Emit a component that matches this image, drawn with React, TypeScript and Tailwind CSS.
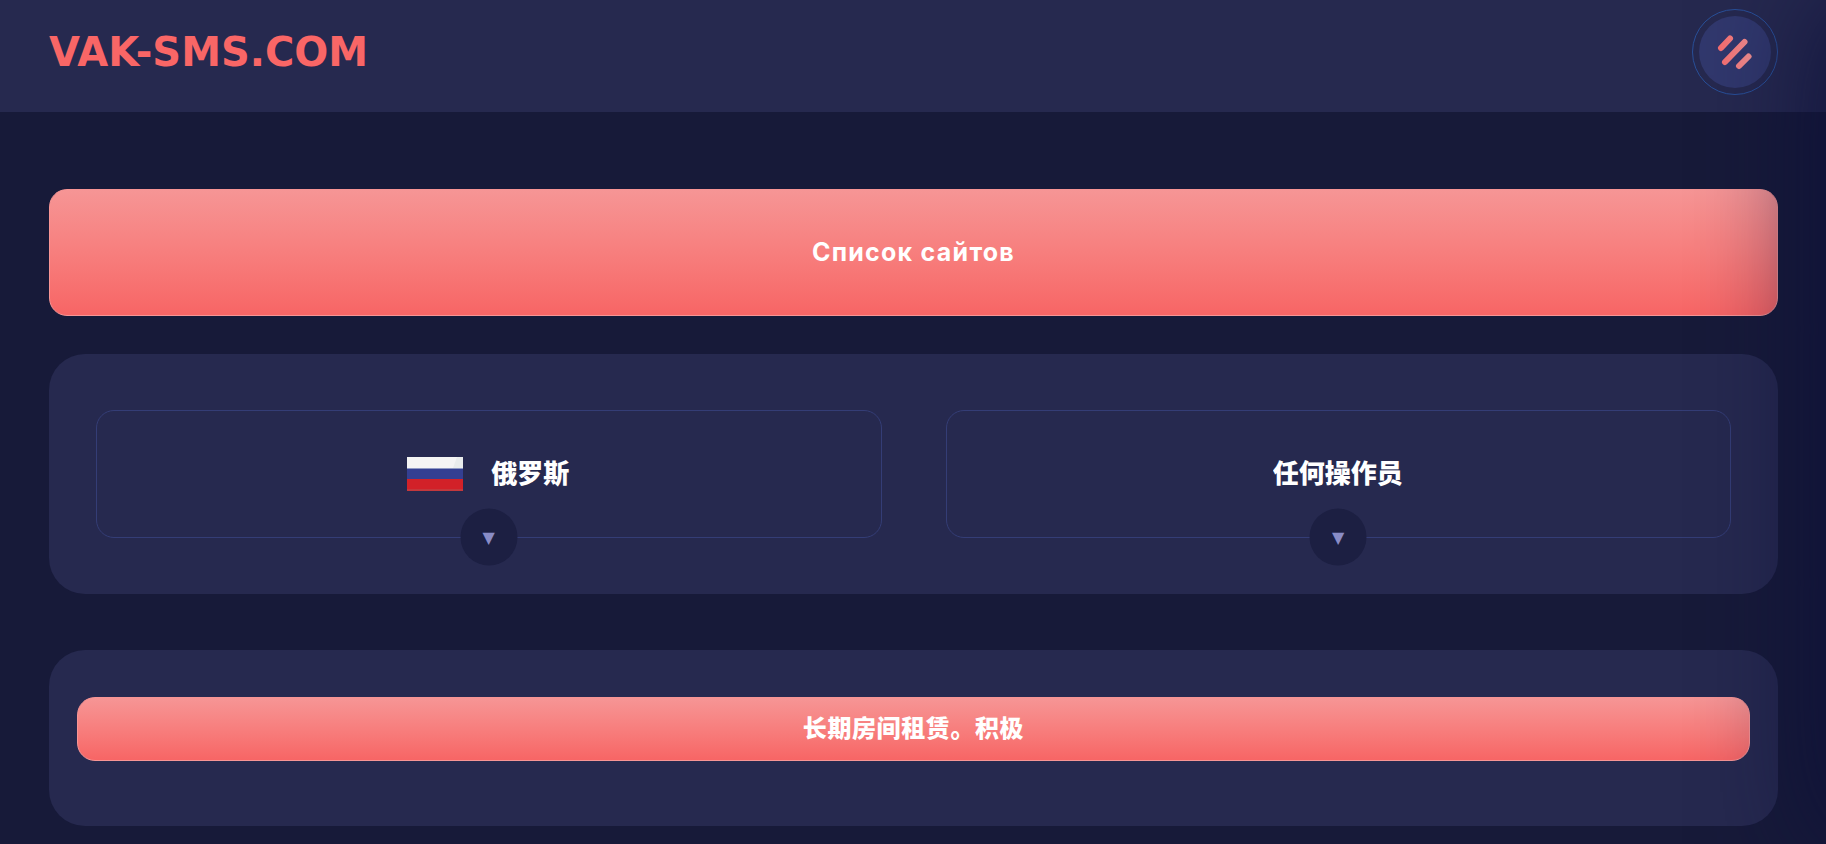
import React from 'react'

type PickerProps = {
  label: string
  options: string[]
  flag?: React.ReactNode
}

const RussianFlag = () => (
  <svg className="h-[34px] w-14 shrink-0" viewBox="0 0 56 34" aria-hidden="true">
    <rect width="56" height="12" fill="#f4f4f4" />
    <path d="M50 0h6v11h-10z" fill="#e9ecec" />
    <rect y="11" width="56" height="12" fill="#8f99c4" />
    <rect y="12" width="56" height="11" fill="#343f92" />
    <rect y="22" width="56" height="12" fill="#d22128" />
    <rect y="32" width="56" height="2" fill="#c4383c" />
  </svg>
)

const MenuIcon = () => (
  <svg className="h-9 w-9" viewBox="0 0 36 36" fill="none" aria-hidden="true">
    <defs>
      <linearGradient id="bars" x1="3" y1="0" x2="33" y2="0" gradientUnits="userSpaceOnUse">
        <stop stopColor="#f76e70" />
        <stop offset="1" stopColor="#f79090" />
      </linearGradient>
    </defs>
    <g stroke="url(#bars)" strokeWidth="6" strokeLinecap="round">
      <path d="M4 14L13 4.5" />
      <path d="M8 28L27.5 8" />
      <path d="M22 32L31.5 22.5" />
    </g>
  </svg>
)

const Picker: React.FC<PickerProps> = ({ label, options, flag }) => (
  <div className="relative flex h-32 items-center justify-center gap-7 rounded-[18px] border border-[#343d76]">
    {flag}
    <select
      aria-label={label}
      className="h-12 cursor-pointer appearance-none bg-transparent text-[26px] leading-12 font-black text-white outline-none"
    >
      {options.map((option) => (
        <option key={option}>{option}</option>
      ))}
    </select>
    <span
      aria-hidden="true"
      className="pointer-events-none absolute top-full left-1/2 flex h-[57px] w-[57px] -translate-x-1/2 -translate-y-1/2 items-center justify-center rounded-full bg-[#1c1f42] font-['DejaVu_Sans',sans-serif] text-base text-[#898cc6]"
    >
      ▼
    </span>
  </div>
)

export default function App() {
  return (
    <div className="min-h-screen overflow-x-hidden bg-[#171a39] pb-[18px] font-['Inter','Noto_Sans_CJK_SC',sans-serif]">
      <header className="flex h-28 items-start justify-between bg-[#26294f] pt-[9px] pr-12 pl-[49px]">
        <a
          href="#"
          className="flex h-[86px] items-center font-['DejaVu_Sans',sans-serif] text-[40px] leading-none font-bold text-[#f96666]"
        >
          VAK-SMS.COM
        </a>
        <button
          type="button"
          aria-label="Меню"
          className="flex h-[86px] w-[86px] items-center justify-center rounded-full border border-[#295099]"
        >
          <span className="flex h-18 w-18 items-center justify-center rounded-full bg-[#31386d]">
            <MenuIcon />
          </span>
        </button>
      </header>

      <main className="pt-[77px] pr-12 pl-[49px]">
        <button
          type="button"
          className="h-[127px] w-full rounded-[18px] border border-[#f79595] bg-linear-to-b from-[#f69595] to-[#f76565] text-[25px] font-bold tracking-wider text-white"
        >
          Список сайтов
        </button>

        <section className="mt-[38px] grid grid-cols-1 gap-16 rounded-[36px] bg-[#26294f] px-[47px] py-14 md:grid-cols-2">
          <Picker label="国家" options={['俄罗斯']} flag={<RussianFlag />} />
          <Picker label="操作员" options={['任何操作员']} />
        </section>

        <section className="mt-14 rounded-[36px] bg-[#26294f] px-7 pt-[47px] pb-[65px]">
          <button
            type="button"
            className="h-16 w-full rounded-[18px] border border-[#f79595] bg-linear-to-b from-[#f69595] to-[#f76565] text-2xl font-black tracking-wide text-white"
          >
            长期房间租赁。积极
          </button>
        </section>
      </main>

      {/* closed side menu, only its shadow reaches into the page */}
      <aside
        aria-hidden="true"
        className="pointer-events-none fixed top-0 left-full h-screen w-80 shadow-[0_0_120px_#0c0f38]"
      />
    </div>
  )
}
